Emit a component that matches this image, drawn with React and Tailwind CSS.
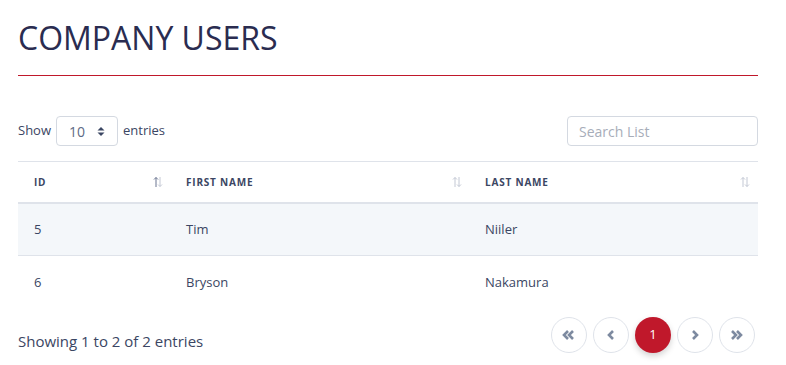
import React from "react";

const SortIcon = ({ active }) => (
  <svg width="10" height="12" viewBox="0 0 10 12" fill="none">
    <path d="M3 11V1.5M1 3.5L3 1.5L5 3.5" stroke={active ? "#6b7591" : "#c3c8d4"} strokeWidth="1" />
    <path d="M7 1V10.5M5 8.5L7 10.5L9 8.5" stroke="#c3c8d4" strokeWidth="1" />
  </svg>
);

const Chev = ({ dir, dbl }) => {
  const c = "#7d8aa0";
  const one = (x, k) =>
    dir === "l" ? (
      <path key={k} d={`M${x + 4} 2L${x} 6L${x + 4} 10`} stroke={c} strokeWidth="2.6" fill="none" />
    ) : (
      <path key={k} d={`M${x} 2L${x + 4} 6L${x} 10`} stroke={c} strokeWidth="2.6" fill="none" />
    );
  return (
    <svg width={dbl ? 14 : 8} height="12" viewBox={dbl ? "0 0 14 12" : "0 0 8 12"}>
      {dbl ? [one(2, "a"), one(7, "b")] : one(2, "a")}
    </svg>
  );
};

export default function App() {
  const rows = [
    { id: 5, first: "Tim", last: "Niiler" },
    { id: 6, first: "Bryson", last: "Nakamura" },
  ];
  return (
    <div
      className="w-[786px] h-[365px] bg-white px-[18px] pt-[17px] text-[#3b4663]"
      style={{ fontFamily: '"Open Sans", sans-serif' }}
    >
      <h1 className="text-[32px] leading-[42px] text-[#2a2c50]">COMPANY USERS</h1>
      <div className="w-[740px] mt-[16px] border-t border-[#c0182b]"></div>
      <div className="w-[740px] flex items-center justify-between mt-[40px]">
        <div className="flex items-center gap-[5px] text-[13px]">
          <span>Show</span>
          <div className="w-[62px] h-[30px] border border-[#d4d9e1] rounded-[4px] flex items-center justify-center gap-[12px] text-[#5d6a85] text-[14px]">
            <span>10</span>
            <svg width="8" height="11" viewBox="0 0 8 11">
              <path d="M0.5 4.5L4 1L7.5 4.5Z" fill="#3b4663" />
              <path d="M0.5 6.5L4 10L7.5 6.5Z" fill="#3b4663" />
            </svg>
          </div>
          <span>entries</span>
        </div>
        <div className="w-[191px] h-[30px] border border-[#d4d9e1] rounded-[4px] flex items-center px-[11px] text-[14px] text-[#a7adb9]">
          Search List
        </div>
      </div>
      <div className="w-[740px] mt-[15px] border-t border-[#dfe3ea]">
        <div className="flex h-[42px] items-center border-b-2 border-[#dfe3ea] text-[10px] font-bold tracking-[0.8px] text-[#3b4663]">
          <div className="w-[153px] pl-[16px] pr-[8px] flex items-center justify-between">
            <span>ID</span>
            <SortIcon active />
          </div>
          <div className="w-[299px] pl-[15px] pr-[8px] flex items-center justify-between">
            <span>FIRST NAME</span>
            <SortIcon />
          </div>
          <div className="flex-1 pl-[15px] pr-[8px] flex items-center justify-between">
            <span>LAST NAME</span>
            <SortIcon />
          </div>
        </div>
        {rows.map((r, i) => (
          <div
            key={r.id}
            className={`flex items-center text-[13px] ${i === 0 ? "bg-[#f4f7fa] border-b border-[#dfe3ea] h-[52px]" : "h-[53px]"}`}
          >
            <div className="w-[153px] pl-[16px]">{r.id}</div>
            <div className="w-[299px] pl-[15px]">{r.first}</div>
            <div className="flex-1 pl-[15px]">{r.last}</div>
          </div>
        ))}
      </div>
      <div className="w-[740px] flex items-center justify-between mt-[8px]">
        <span className="text-[15px] mt-[13px]">Showing 1 to 2 of 2 entries</span>
        <div className="flex items-center gap-[6px] pr-[3px]">
          <div className="w-[36px] h-[36px] rounded-full border border-[#dfe3ea] flex items-center justify-center">
            <Chev dir="l" dbl />
          </div>
          <div className="w-[36px] h-[36px] rounded-full border border-[#dfe3ea] flex items-center justify-center">
            <Chev dir="l" />
          </div>
          <div className="w-[36px] h-[36px] rounded-full bg-[#c0182b] flex items-center justify-center text-white text-[13px] shadow-[0_3px_6px_rgba(0,0,0,0.18)]">
            1
          </div>
          <div className="w-[36px] h-[36px] rounded-full border border-[#dfe3ea] flex items-center justify-center">
            <Chev dir="r" />
          </div>
          <div className="w-[36px] h-[36px] rounded-full border border-[#dfe3ea] flex items-center justify-center">
            <Chev dir="r" dbl />
          </div>
        </div>
      </div>
    </div>
  );
}
